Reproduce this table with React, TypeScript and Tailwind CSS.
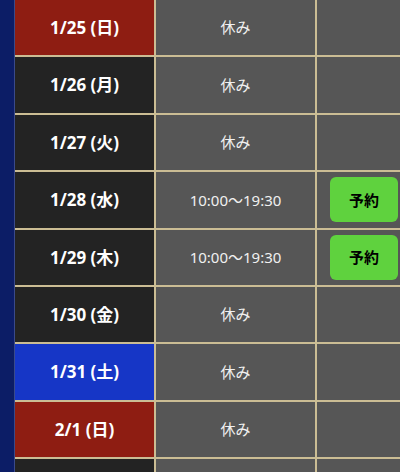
interface Day {
  date: string
  kind: 'sun' | 'sat' | 'week'
  hours: string | null
}

const DAYS: Day[] = [
  { date: '1/25 (日)', kind: 'sun', hours: null },
  { date: '1/26 (月)', kind: 'week', hours: null },
  { date: '1/27 (火)', kind: 'week', hours: null },
  { date: '1/28 (水)', kind: 'week', hours: '10:00〜19:30' },
  { date: '1/29 (木)', kind: 'week', hours: '10:00〜19:30' },
  { date: '1/30 (金)', kind: 'week', hours: null },
  { date: '1/31 (土)', kind: 'sat', hours: null },
  { date: '2/1 (日)', kind: 'sun', hours: null },
  { date: '2/2 (月)', kind: 'week', hours: null },
]

const DATE_BG: Record<Day['kind'], string> = {
  sun: 'bg-[#8e1d12]',
  sat: 'bg-[#1636c6]',
  week: 'bg-[#232323]',
}

function Row({ day }: { day: Day }) {
  return (
    <div className="flex shrink-0 h-[57.4px] border-b-2 border-[#cbbd94]">
      <div
        className={`w-[139px] shrink-0 flex items-center justify-center text-white text-[17px] font-bold ${DATE_BG[day.kind]}`}
      >
        {day.date}
      </div>
      <div className="w-[161px] shrink-0 border-l-2 border-[#cbbd94] bg-[#565656] flex items-center justify-center text-[#f0f0f0] text-[15px]">
        {day.hours ?? '休み'}
      </div>
      <div className="flex-1 border-l-2 border-[#cbbd94] bg-[#565656] flex items-center pl-[13px]">
        {day.hours && (
          <button className="w-[68px] h-[45px] shrink-0 rounded-[6px] bg-[#5fd23e] text-black text-[15px] font-bold">
            予約
          </button>
        )}
      </div>
    </div>
  )
}

export default function App() {
  return (
    <div
      className="w-[400px] h-[472px] overflow-hidden flex bg-[#0c1d66]"
      style={{ fontFamily: '"Noto Sans", "Noto Sans CJK JP", sans-serif' }}
    >
      <div className="w-[15px] shrink-0 bg-[#0c1d66] border-r border-[#3a4a8a]" />
      <div className="flex-1 flex flex-col">
        {DAYS.map((d) => (
          <Row key={d.date} day={d} />
        ))}
      </div>
    </div>
  )
}
